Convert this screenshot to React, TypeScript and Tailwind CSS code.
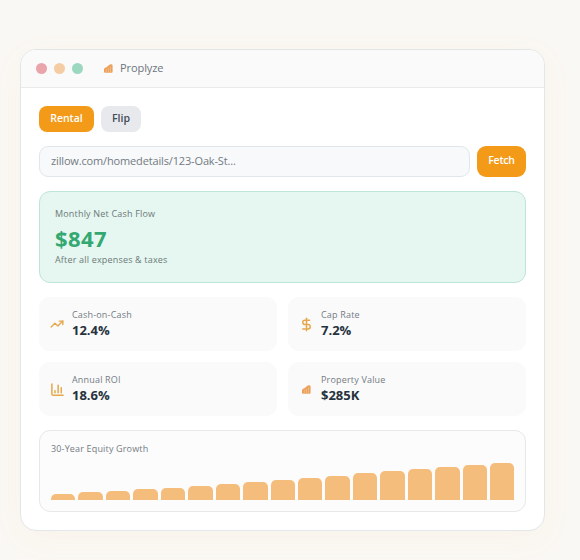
import { ChartColumn, DollarSign, TrendingUp } from "lucide-react";
import type { ReactNode } from "react";

const bars = [6, 8, 9.4, 10.8, 12.2, 14, 16, 18, 20.4, 22.2, 24.2, 26.8, 29, 31.4, 33.4, 35.4, 37];

function Logo() {
  return (
    <svg viewBox="0 0 9 9" className="size-[9px] shrink-0">
      <path d="M0 5.2Q0 4.4.8 4.1L2.4 3.3 5.8.6Q6.6.1 7.5.2 8.6.4 8.6 1.6V7.7Q8.6 8.7 7.6 8.7H1Q0 8.7 0 7.7Z" fill="#eba05c" />
      <path d="M2.3 4.8V8.7M4.4 3.6V8.7M6.5 2.4V8.7" stroke="#f6c797" strokeWidth=".6" />
    </svg>
  );
}

function Stat({ icon, label, value }: { icon: ReactNode; label: string; value: string }) {
  return (
    <div className="flex h-[54px] items-center rounded-[11px] bg-[#fafafa] pl-[11px]">
      <div className="flex w-[22px] shrink-0 items-center">{icon}</div>
      <div className="pb-px whitespace-nowrap">
        <div className="text-[9px] leading-[14px] tracking-[0.18px] text-[#747b83]">{label}</div>
        <div className="text-[13px] leading-[17px] font-bold tracking-[0px] text-[#26323d]">{value}</div>
      </div>
    </div>
  );
}

export default function App() {
  return (
    <main className="h-[560px] w-[580px] bg-[#faf8f4] pt-[49px] pl-[20px] font-['Open_Sans',sans-serif]">
      <section className="h-[482px] w-[525px] overflow-hidden rounded-[16px] border border-[#e3e6e8] bg-white shadow-[0_8px_32px_rgba(245,158,66,0.05)]">
        <header className="flex h-[38px] items-center border-b border-[#e8eaec] bg-[#fafafa] pb-px pl-[14.5px]">
          <div className="flex gap-[7.3px]">
            <span className="size-[11px] rounded-full bg-[#e9a5aa]" />
            <span className="size-[11px] rounded-full bg-[#f5cda4]" />
            <span className="size-[11px] rounded-full bg-[#9cd7c0]" />
          </div>
          <div className="ml-[21px] flex items-center gap-[7px]">
            <Logo />
            <span className="text-[11px] leading-[16px] tracking-[-0.1px] text-[#6d757d]">Proplyze</span>
          </div>
        </header>

        <div className="px-[18px] pt-[18px]">
          <div className="flex gap-[7px] text-[10.5px] font-semibold">
            <button className="h-[26px] w-[55px] rounded-[8px] bg-[#f39a19] text-white">Rental</button>
            <button className="h-[26px] w-[40px] rounded-[8px] bg-[#e8e9ed] text-[#414c58]">Flip</button>
          </div>

          <div className="mt-[14px] flex h-[31px] gap-[7px]">
            <div className="flex w-[431px] items-center rounded-[9px] border border-[#dfe7ec] bg-[#f7f9fb] pl-[11px] text-[11px] tracking-[-0.15px] text-[#737a81]">
              zillow.com/homedetails/123-Oak-St...
            </div>
            <button className="w-[49px] rounded-[9px] bg-[#f39a19] pb-[2px] text-[10.5px] font-semibold tracking-[-0.2px] text-white">Fetch</button>
          </div>

          <div className="mt-[14px] h-[92px] w-[487px] rounded-[11px] border border-[#bfe5d6] bg-[#e6f6f0] pt-[14px] pl-[15px] text-[9px] tracking-[0.18px] text-[#6b7a78]">
            <div className="leading-[15px]">Monthly Net Cash Flow</div>
            <div className="mt-[2px] text-[22px] leading-[30px] font-bold tracking-[0.4px] text-[#34a871]">$847</div>
            <div className="leading-[13px]">After all expenses &amp; taxes</div>
          </div>

          <div className="mt-[14px] grid w-[487px] grid-cols-2 gap-[11px]">
            <Stat icon={<TrendingUp size={14} strokeWidth={2.4} color="#e5a84e" />} label="Cash-on-Cash" value="12.4%" />
            <Stat icon={<DollarSign size={15} strokeWidth={2.4} color="#e5a84e" />} label="Cap Rate" value="7.2%" />
            <Stat icon={<ChartColumn size={15} strokeWidth={2.4} color="#e5a84e" />} label="Annual ROI" value="18.6%" />
            <Stat icon={<span className="ml-[3px]"><Logo /></span>} label="Property Value" value="$285K" />
          </div>

          <div className="mt-[14px] flex h-[82px] w-[487px] flex-col justify-between rounded-[11px] border border-[#e6e8ea] bg-[#fcfcfc] pt-[10px] pr-[10.5px] pb-[11px] pl-[11px]">
            <div className="text-[9px] leading-[15px] tracking-[0.16px] text-[#747b83]">30-Year Equity Growth</div>
            <div className="flex h-[38px] items-end gap-[3px]">
              {bars.map((height, i) => (
                <div key={i} className="flex-1 rounded-t-[5px] bg-[#f5bd7c]" style={{ height }} />
              ))}
            </div>
          </div>
        </div>
      </section>
    </main>
  );
}
